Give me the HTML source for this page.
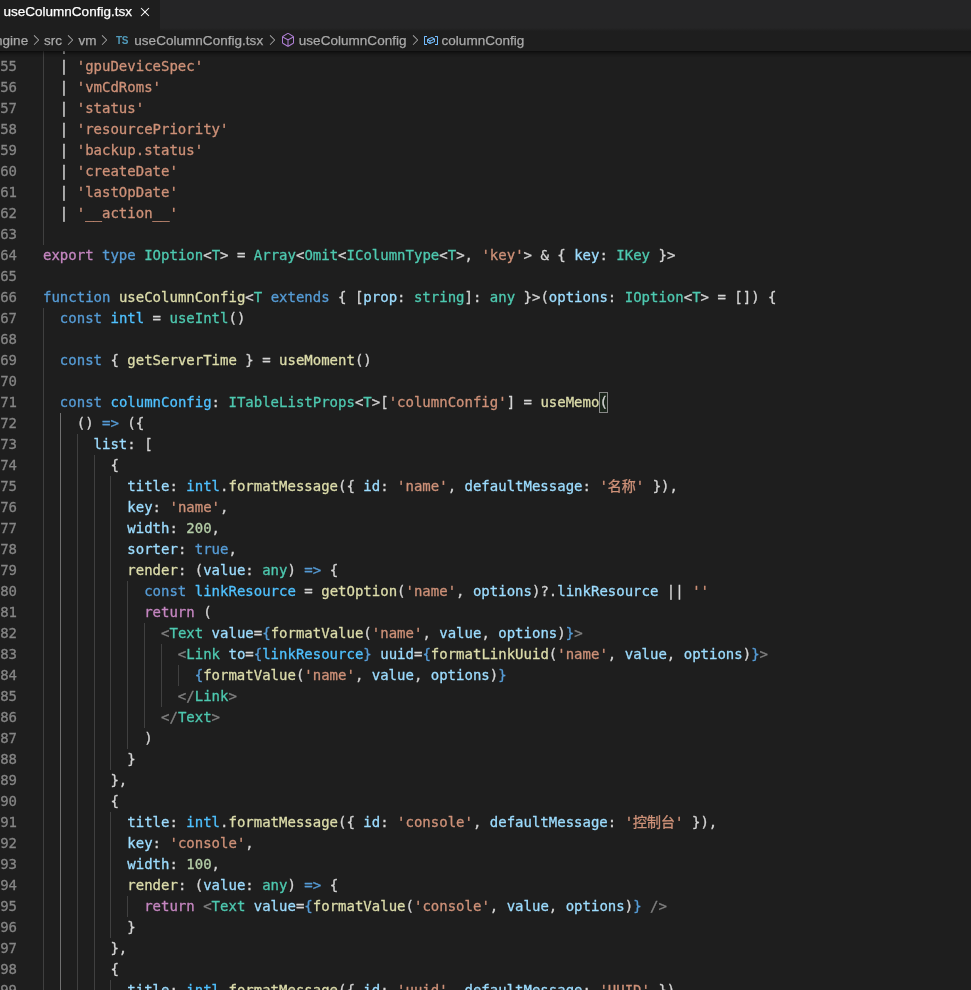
<!DOCTYPE html>
<html lang="en"><head><meta charset="utf-8"><title>useColumnConfig.tsx</title>
<style>
html,body{margin:0;padding:0;background:#1e1e1e;}
body{width:971px;height:990px;overflow:hidden;position:relative;font-family:"Liberation Sans","Noto Sans CJK SC",sans-serif;}
#tabs{will-change:transform;position:absolute;left:0;top:0;width:971px;height:28px;background:#252526;}
#tab{position:absolute;left:0;top:0;width:160px;height:28px;background:#1e1e1e;color:#fff;font-size:13px;line-height:29px;}
#tab .lbl{position:absolute;left:3.4px;top:-3.3px;white-space:nowrap;font-size:13.5px;letter-spacing:0.02px;-webkit-text-stroke:0.25px;}
#bc{will-change:transform;position:absolute;left:0;top:28px;width:971px;height:23px;color:#a9a9a9;font-size:13px;line-height:22px;}
#bc span{position:absolute;top:1.7px;white-space:nowrap;font-size:13.5px;letter-spacing:0.03px;-webkit-text-stroke:0.25px;}
#bc .ts{color:#519aba;font-size:10px;font-weight:bold;letter-spacing:-0.4px;top:1.6px;-webkit-text-stroke:0;}
#bc svg{position:absolute;}
#shadow{position:absolute;left:0;top:51px;width:971px;height:6px;box-shadow:#000 0 6px 6px -6px inset, rgba(0,0,0,.45) 0 3px 3px -3px inset;z-index:5;}
#tg{position:absolute;left:160px;top:28px;width:811px;height:3px;background:linear-gradient(#252526,#1e1e1e);z-index:6;}
#ed{position:absolute;left:0;top:51px;width:971px;height:939px;overflow:hidden;will-change:transform;}
.ln{position:absolute;left:0;width:971px;height:21px;line-height:21px;font-family:"DejaVu Sans Mono","Liberation Mono","Noto Sans CJK SC",monospace;font-size:14px;color:#d4d4d4;white-space:pre;-webkit-text-stroke:0.3px;}
.no{position:absolute;left:-40px;width:57px;text-align:right;color:#858585;}
.cd{position:absolute;left:43px;top:0;}
.gd{position:absolute;top:0;width:1px;height:21px;background:#404040;}
.ga{background:#707070;}
.k{color:#569cd6}.c{color:#c586c0}.t{color:#4ec9b0}.f{color:#dcdcaa}.v{color:#9cdcfe}.n{color:#4fc1ff}.s{color:#ce9178}.m{color:#b5cea8}.g{color:#808080}
.z{color:#ce9178;font-family:"Noto Sans CJK SC",sans-serif;line-height:0;}
.bm{position:absolute;top:0;height:21px;box-sizing:border-box;border:1px solid #888;background:rgba(0,100,0,.1);}
</style></head><body>
<div id="tabs"><div id="tab"><span class="lbl">useColumnConfig.tsx</span>
<svg style="position:absolute;left:136.9px;top:3.9px" width="16" height="16" viewBox="0 0 16 16"><path fill="#fff" d="M8 8.707l3.646 3.647.708-.707L8.707 8l3.647-3.646-.707-.708L8 7.293 4.354 3.646l-.707.708L7.293 8l-3.646 3.646.707.708L8 8.707z"/></svg>
</div></div>
<div id="tg"></div>
<div id="bc">
<span style="left:-5px">ngine</span>
<svg style="left:27.85px;top:4px" width="16" height="16" viewBox="0 0 16 16"><path fill="#a9a9a9" d="M10.072 8.024L5.715 3.667l.618-.62L11 7.716v.618L6.333 13l-.618-.619 4.357-4.357z"/></svg>
<span style="left:44px">src</span>
<svg style="left:62.15px;top:4px" width="16" height="16" viewBox="0 0 16 16"><path fill="#a9a9a9" d="M10.072 8.024L5.715 3.667l.618-.62L11 7.716v.618L6.333 13l-.618-.619 4.357-4.357z"/></svg>
<span style="left:78.6px">vm</span>
<svg style="left:96.30px;top:4px" width="16" height="16" viewBox="0 0 16 16"><path fill="#a9a9a9" d="M10.072 8.024L5.715 3.667l.618-.62L11 7.716v.618L6.333 13l-.618-.619 4.357-4.357z"/></svg>
<span class="ts" style="left:116px">TS</span>
<span style="left:134.3px">useColumnConfig.tsx</span>
<svg style="left:263.85px;top:4px" width="16" height="16" viewBox="0 0 16 16"><path fill="#a9a9a9" d="M10.072 8.024L5.715 3.667l.618-.62L11 7.716v.618L6.333 13l-.618-.619 4.357-4.357z"/></svg>
<svg style="left:279.8px;top:4.1px" width="16" height="16" viewBox="0 0 16 16"><path fill="#b180d7" d="M13.51 4l-5-3h-1l-5 3-.49.86v6l.49.85 5 3h1l5-3 .49-.85v-6L13.51 4zm-6 9.56l-4.5-2.7V5.7l4.5 2.45v5.41zM3.27 4.700l4.74-2.84 4.74 2.84-4.74 2.59L3.27 4.700zm9.74 6.160l-4.5 2.7V8.150l4.5-2.45v5.160z"/></svg>
<span style="left:298.8px">useColumnConfig</span>
<svg style="left:406.75px;top:4px" width="16" height="16" viewBox="0 0 16 16"><path fill="#a9a9a9" d="M10.072 8.024L5.715 3.667l.618-.62L11 7.716v.618L6.333 13l-.618-.619 4.357-4.357z"/></svg>
<svg style="left:422.8px;top:3.9px" width="16" height="16" viewBox="0 0 16 16"><path fill="#75beff" d="M2 5h2V4H1.5l-.5.5v8l.5.5H4v-1H2V5zm12.5-1H12v1h2v7h-2v1h2.500l.5-.5v-8l-.5-.5zm-2.740 2.570L12 7v2.510l-.3.450-4.500 2h-.460l-2.500-1.500-.240-.430v-2.500l.3-.460 4.500-2h.460l2.500 1.500zM5 9.710l1.500.9V9.280L5 8.380v1.330zm.58-2.150l1.450.87 3.390-1.500-1.450-.87-3.390 1.500zm1.950 3.170l3.500-1.560v-1.400l-3.500 1.550v1.410z"/></svg>
<span style="left:441.5px">columnConfig</span>
</div>
<div id="ed">
<div class="ln" style="top:-16.0px"><span class="no">54</span><i class="gd" style="left:43.00px"></i><span class="cd">  |</span></div>
<div class="ln" style="top:5.0px"><span class="no">55</span><i class="gd" style="left:43.00px"></i><span class="cd">  | <span class="s">'gpuDeviceSpec'</span></span></div>
<div class="ln" style="top:26.0px"><span class="no">56</span><i class="gd" style="left:43.00px"></i><span class="cd">  | <span class="s">'vmCdRoms'</span></span></div>
<div class="ln" style="top:47.0px"><span class="no">57</span><i class="gd" style="left:43.00px"></i><span class="cd">  | <span class="s">'status'</span></span></div>
<div class="ln" style="top:68.0px"><span class="no">58</span><i class="gd" style="left:43.00px"></i><span class="cd">  | <span class="s">'resourcePriority'</span></span></div>
<div class="ln" style="top:89.0px"><span class="no">59</span><i class="gd" style="left:43.00px"></i><span class="cd">  | <span class="s">'backup.status'</span></span></div>
<div class="ln" style="top:110.0px"><span class="no">60</span><i class="gd" style="left:43.00px"></i><span class="cd">  | <span class="s">'createDate'</span></span></div>
<div class="ln" style="top:131.0px"><span class="no">61</span><i class="gd" style="left:43.00px"></i><span class="cd">  | <span class="s">'lastOpDate'</span></span></div>
<div class="ln" style="top:152.0px"><span class="no">62</span><i class="gd" style="left:43.00px"></i><span class="cd">  | <span class="s">'__action__'</span></span></div>
<div class="ln" style="top:173.0px"><span class="no">63</span><i class="gd" style="left:43.00px"></i><span class="cd"></span></div>
<div class="ln" style="top:194.0px"><span class="no">64</span><span class="cd"><span class="c">export</span> <span class="k">type</span> <span class="t">IOption</span>&lt;<span class="t">T</span>&gt; = <span class="t">Array</span>&lt;<span class="t">Omit</span>&lt;<span class="t">IColumnType</span>&lt;<span class="t">T</span>&gt;, <span class="s">'key'</span>&gt; &amp; { <span class="v">key</span>: <span class="t">IKey</span> }&gt;</span></div>
<div class="ln" style="top:215.0px"><span class="no">65</span><span class="cd"></span></div>
<div class="ln" style="top:236.0px"><span class="no">66</span><span class="cd"><span class="k">function</span> <span class="f">useColumnConfig</span>&lt;<span class="t">T</span> <span class="k">extends</span> { [<span class="v">prop</span>: <span class="t">string</span>]: <span class="t">any</span> }&gt;(<span class="v">options</span>: <span class="t">IOption</span>&lt;<span class="t">T</span>&gt; = []) {</span></div>
<div class="ln" style="top:257.0px"><span class="no">67</span><i class="gd" style="left:43.00px"></i><span class="cd">  <span class="k">const</span> <span class="n">intl</span> = <span class="t">useIntl</span>()</span></div>
<div class="ln" style="top:278.0px"><span class="no">68</span><i class="gd" style="left:43.00px"></i><span class="cd"></span></div>
<div class="ln" style="top:299.0px"><span class="no">69</span><i class="gd" style="left:43.00px"></i><span class="cd">  <span class="k">const</span> { <span class="f">getServerTime</span> } = <span class="f">useMoment</span>()</span></div>
<div class="ln" style="top:320.0px"><span class="no">70</span><i class="gd" style="left:43.00px"></i><span class="cd"></span></div>
<div class="ln" style="top:341.0px"><span class="no">71</span><i class="gd" style="left:43.00px"></i><i class="bm" style="left:599px;width:9px"></i><span class="cd">  <span class="k">const</span> <span class="n">columnConfig</span>: <span class="t">ITableListProps</span>&lt;<span class="t">T</span>&gt;[<span class="s">'columnConfig'</span>] = <span class="f">useMemo</span>(</span></div>
<div class="ln" style="top:362.0px"><span class="no">72</span><i class="gd" style="left:43.00px"></i><i class="gd ga" style="left:59.86px"></i><span class="cd">    () <span class="k">=&gt;</span> ({</span></div>
<div class="ln" style="top:383.0px"><span class="no">73</span><i class="gd" style="left:43.00px"></i><i class="gd ga" style="left:59.86px"></i><i class="gd" style="left:76.72px"></i><span class="cd">      <span class="v">list</span>: [</span></div>
<div class="ln" style="top:404.0px"><span class="no">74</span><i class="gd" style="left:43.00px"></i><i class="gd ga" style="left:59.86px"></i><i class="gd" style="left:76.72px"></i><i class="gd" style="left:93.58px"></i><span class="cd">        {</span></div>
<div class="ln" style="top:425.0px"><span class="no">75</span><i class="gd" style="left:43.00px"></i><i class="gd ga" style="left:59.86px"></i><i class="gd" style="left:76.72px"></i><i class="gd" style="left:93.58px"></i><i class="gd" style="left:110.44px"></i><span class="cd">          <span class="v">title</span>: <span class="n">intl</span>.<span class="f">formatMessage</span>({ <span class="v">id</span>: <span class="s">'name'</span>, <span class="v">defaultMessage</span>: <span class="s">'</span><span class="z">名称</span><span class="s">'</span> }),</span></div>
<div class="ln" style="top:446.0px"><span class="no">76</span><i class="gd" style="left:43.00px"></i><i class="gd ga" style="left:59.86px"></i><i class="gd" style="left:76.72px"></i><i class="gd" style="left:93.58px"></i><i class="gd" style="left:110.44px"></i><span class="cd">          <span class="v">key</span>: <span class="s">'name'</span>,</span></div>
<div class="ln" style="top:467.0px"><span class="no">77</span><i class="gd" style="left:43.00px"></i><i class="gd ga" style="left:59.86px"></i><i class="gd" style="left:76.72px"></i><i class="gd" style="left:93.58px"></i><i class="gd" style="left:110.44px"></i><span class="cd">          <span class="v">width</span>: <span class="m">200</span>,</span></div>
<div class="ln" style="top:488.0px"><span class="no">78</span><i class="gd" style="left:43.00px"></i><i class="gd ga" style="left:59.86px"></i><i class="gd" style="left:76.72px"></i><i class="gd" style="left:93.58px"></i><i class="gd" style="left:110.44px"></i><span class="cd">          <span class="v">sorter</span>: <span class="k">true</span>,</span></div>
<div class="ln" style="top:509.0px"><span class="no">79</span><i class="gd" style="left:43.00px"></i><i class="gd ga" style="left:59.86px"></i><i class="gd" style="left:76.72px"></i><i class="gd" style="left:93.58px"></i><i class="gd" style="left:110.44px"></i><span class="cd">          <span class="f">render</span>: (<span class="v">value</span>: <span class="t">any</span>) <span class="k">=&gt;</span> {</span></div>
<div class="ln" style="top:530.0px"><span class="no">80</span><i class="gd" style="left:43.00px"></i><i class="gd ga" style="left:59.86px"></i><i class="gd" style="left:76.72px"></i><i class="gd" style="left:93.58px"></i><i class="gd" style="left:110.44px"></i><i class="gd" style="left:127.30px"></i><span class="cd">            <span class="k">const</span> <span class="n">linkResource</span> = <span class="f">getOption</span>(<span class="s">'name'</span>, <span class="v">options</span>)?.<span class="v">linkResource</span> || <span class="s">''</span></span></div>
<div class="ln" style="top:551.0px"><span class="no">81</span><i class="gd" style="left:43.00px"></i><i class="gd ga" style="left:59.86px"></i><i class="gd" style="left:76.72px"></i><i class="gd" style="left:93.58px"></i><i class="gd" style="left:110.44px"></i><i class="gd" style="left:127.30px"></i><span class="cd">            <span class="c">return</span> (</span></div>
<div class="ln" style="top:572.0px"><span class="no">82</span><i class="gd" style="left:43.00px"></i><i class="gd ga" style="left:59.86px"></i><i class="gd" style="left:76.72px"></i><i class="gd" style="left:93.58px"></i><i class="gd" style="left:110.44px"></i><i class="gd" style="left:127.30px"></i><i class="gd" style="left:144.16px"></i><span class="cd">              <span class="g">&lt;</span><span class="t">Text</span> <span class="v">value</span>=<span class="k">{</span><span class="f">formatValue</span>(<span class="s">'name'</span>, <span class="v">value</span>, <span class="v">options</span>)<span class="k">}</span><span class="g">&gt;</span></span></div>
<div class="ln" style="top:593.0px"><span class="no">83</span><i class="gd" style="left:43.00px"></i><i class="gd ga" style="left:59.86px"></i><i class="gd" style="left:76.72px"></i><i class="gd" style="left:93.58px"></i><i class="gd" style="left:110.44px"></i><i class="gd" style="left:127.30px"></i><i class="gd" style="left:144.16px"></i><i class="gd" style="left:161.02px"></i><span class="cd">                <span class="g">&lt;</span><span class="t">Link</span> <span class="v">to</span>=<span class="k">{</span><span class="n">linkResource</span><span class="k">}</span> <span class="v">uuid</span>=<span class="k">{</span><span class="f">formatLinkUuid</span>(<span class="s">'name'</span>, <span class="v">value</span>, <span class="v">options</span>)<span class="k">}</span><span class="g">&gt;</span></span></div>
<div class="ln" style="top:614.0px"><span class="no">84</span><i class="gd" style="left:43.00px"></i><i class="gd ga" style="left:59.86px"></i><i class="gd" style="left:76.72px"></i><i class="gd" style="left:93.58px"></i><i class="gd" style="left:110.44px"></i><i class="gd" style="left:127.30px"></i><i class="gd" style="left:144.16px"></i><i class="gd" style="left:161.02px"></i><i class="gd" style="left:177.88px"></i><span class="cd">                  <span class="k">{</span><span class="f">formatValue</span>(<span class="s">'name'</span>, <span class="v">value</span>, <span class="v">options</span>)<span class="k">}</span></span></div>
<div class="ln" style="top:635.0px"><span class="no">85</span><i class="gd" style="left:43.00px"></i><i class="gd ga" style="left:59.86px"></i><i class="gd" style="left:76.72px"></i><i class="gd" style="left:93.58px"></i><i class="gd" style="left:110.44px"></i><i class="gd" style="left:127.30px"></i><i class="gd" style="left:144.16px"></i><i class="gd" style="left:161.02px"></i><span class="cd">                <span class="g">&lt;/</span><span class="t">Link</span><span class="g">&gt;</span></span></div>
<div class="ln" style="top:656.0px"><span class="no">86</span><i class="gd" style="left:43.00px"></i><i class="gd ga" style="left:59.86px"></i><i class="gd" style="left:76.72px"></i><i class="gd" style="left:93.58px"></i><i class="gd" style="left:110.44px"></i><i class="gd" style="left:127.30px"></i><i class="gd" style="left:144.16px"></i><span class="cd">              <span class="g">&lt;/</span><span class="t">Text</span><span class="g">&gt;</span></span></div>
<div class="ln" style="top:677.0px"><span class="no">87</span><i class="gd" style="left:43.00px"></i><i class="gd ga" style="left:59.86px"></i><i class="gd" style="left:76.72px"></i><i class="gd" style="left:93.58px"></i><i class="gd" style="left:110.44px"></i><i class="gd" style="left:127.30px"></i><span class="cd">            )</span></div>
<div class="ln" style="top:698.0px"><span class="no">88</span><i class="gd" style="left:43.00px"></i><i class="gd ga" style="left:59.86px"></i><i class="gd" style="left:76.72px"></i><i class="gd" style="left:93.58px"></i><i class="gd" style="left:110.44px"></i><span class="cd">          }</span></div>
<div class="ln" style="top:719.0px"><span class="no">89</span><i class="gd" style="left:43.00px"></i><i class="gd ga" style="left:59.86px"></i><i class="gd" style="left:76.72px"></i><i class="gd" style="left:93.58px"></i><span class="cd">        },</span></div>
<div class="ln" style="top:740.0px"><span class="no">90</span><i class="gd" style="left:43.00px"></i><i class="gd ga" style="left:59.86px"></i><i class="gd" style="left:76.72px"></i><i class="gd" style="left:93.58px"></i><span class="cd">        {</span></div>
<div class="ln" style="top:761.0px"><span class="no">91</span><i class="gd" style="left:43.00px"></i><i class="gd ga" style="left:59.86px"></i><i class="gd" style="left:76.72px"></i><i class="gd" style="left:93.58px"></i><i class="gd" style="left:110.44px"></i><span class="cd">          <span class="v">title</span>: <span class="n">intl</span>.<span class="f">formatMessage</span>({ <span class="v">id</span>: <span class="s">'console'</span>, <span class="v">defaultMessage</span>: <span class="s">'</span><span class="z">控制台</span><span class="s">'</span> }),</span></div>
<div class="ln" style="top:782.0px"><span class="no">92</span><i class="gd" style="left:43.00px"></i><i class="gd ga" style="left:59.86px"></i><i class="gd" style="left:76.72px"></i><i class="gd" style="left:93.58px"></i><i class="gd" style="left:110.44px"></i><span class="cd">          <span class="v">key</span>: <span class="s">'console'</span>,</span></div>
<div class="ln" style="top:803.0px"><span class="no">93</span><i class="gd" style="left:43.00px"></i><i class="gd ga" style="left:59.86px"></i><i class="gd" style="left:76.72px"></i><i class="gd" style="left:93.58px"></i><i class="gd" style="left:110.44px"></i><span class="cd">          <span class="v">width</span>: <span class="m">100</span>,</span></div>
<div class="ln" style="top:824.0px"><span class="no">94</span><i class="gd" style="left:43.00px"></i><i class="gd ga" style="left:59.86px"></i><i class="gd" style="left:76.72px"></i><i class="gd" style="left:93.58px"></i><i class="gd" style="left:110.44px"></i><span class="cd">          <span class="f">render</span>: (<span class="v">value</span>: <span class="t">any</span>) <span class="k">=&gt;</span> {</span></div>
<div class="ln" style="top:845.0px"><span class="no">95</span><i class="gd" style="left:43.00px"></i><i class="gd ga" style="left:59.86px"></i><i class="gd" style="left:76.72px"></i><i class="gd" style="left:93.58px"></i><i class="gd" style="left:110.44px"></i><i class="gd" style="left:127.30px"></i><span class="cd">            <span class="c">return</span> <span class="g">&lt;</span><span class="t">Text</span> <span class="v">value</span>=<span class="k">{</span><span class="f">formatValue</span>(<span class="s">'console'</span>, <span class="v">value</span>, <span class="v">options</span>)<span class="k">}</span> <span class="g">/&gt;</span></span></div>
<div class="ln" style="top:866.0px"><span class="no">96</span><i class="gd" style="left:43.00px"></i><i class="gd ga" style="left:59.86px"></i><i class="gd" style="left:76.72px"></i><i class="gd" style="left:93.58px"></i><i class="gd" style="left:110.44px"></i><span class="cd">          }</span></div>
<div class="ln" style="top:887.0px"><span class="no">97</span><i class="gd" style="left:43.00px"></i><i class="gd ga" style="left:59.86px"></i><i class="gd" style="left:76.72px"></i><i class="gd" style="left:93.58px"></i><span class="cd">        },</span></div>
<div class="ln" style="top:908.0px"><span class="no">98</span><i class="gd" style="left:43.00px"></i><i class="gd ga" style="left:59.86px"></i><i class="gd" style="left:76.72px"></i><i class="gd" style="left:93.58px"></i><span class="cd">        {</span></div>
<div class="ln" style="top:929.0px"><span class="no">99</span><i class="gd" style="left:43.00px"></i><i class="gd ga" style="left:59.86px"></i><i class="gd" style="left:76.72px"></i><i class="gd" style="left:93.58px"></i><i class="gd" style="left:110.44px"></i><span class="cd">          <span class="v">title</span>: <span class="n">intl</span>.<span class="f">formatMessage</span>({ <span class="v">id</span>: <span class="s">'uuid'</span>, <span class="v">defaultMessage</span>: <span class="s">'UUID'</span> }),</span></div>
</div><div id="shadow"></div></body></html>
